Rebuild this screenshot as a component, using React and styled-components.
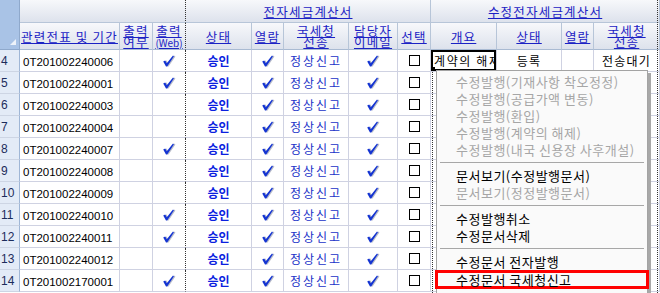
import styled, { createGlobalStyle } from 'styled-components'

const Global = createGlobalStyle`
  html, body { margin: 0; padding: 0; background: #fff; }
  body { font-family: "Noto Sans CJK KR", "Liberation Sans", sans-serif; }
`

const cols = [20, 100, 33, 33, 66, 32, 65, 49, 33, 66, 65, 32, 66]

const rows = [
  { n: 4, id: '0T201002240006', web: true, memo: '계약의 해제', state: '등록', nts: '전송대기' },
  { n: 5, id: '0T201002240001', web: true },
  { n: 6, id: '0T201002240003' },
  { n: 7, id: '0T201002240004' },
  { n: 8, id: '0T201002240007', web: true },
  { n: 9, id: '0T201002240008' },
  { n: 10, id: '0T201002240009' },
  { n: 11, id: '0T201002240010', web: true },
  { n: 12, id: '0T201002240011', web: true },
  { n: 13, id: '0T201002240012' },
  { n: 14, id: '0T201002170001', web: true },
]

const menu = [
  { label: '수정발행(기재사항 착오정정)', off: true },
  { label: '수정발행(공급가액 변동)', off: true },
  { label: '수정발행(환입)', off: true },
  { label: '수정발행(계약의 해제)', off: true },
  { label: '수정발행(내국 신용장 사후개설)', off: true },
  'sep',
  { label: '문서보기(수정발행문서)' },
  { label: '문서보기(정정발행문서)', off: true },
  'sep',
  { label: '수정발행취소' },
  { label: '수정문서삭제' },
  'sep',
  { label: '수정문서 전자발행' },
  { label: '수정문서 국세청신고', mark: true },
]

const Check = () => (
  <svg width="14" height="14" viewBox="0 0 14 14">
    <polygon points="2.6,7.6 4.6,6.6 6.2,9.4 12.4,1.6 13.4,2.4 6.6,12.6 5.4,12.6" fill="#b8bcc8" />
    <polygon points="1.2,7.4 3.2,6.4 4.8,9.2 11,1.4 12,2.2 5.2,12.4 4,12.4" fill="#1434d2" />
  </svg>
)

export default function App() {
  return (
    <>
      <Global />
      <Sheet>
        <Grid>
          <colgroup>
            {cols.map((w, i) => <col key={i} style={{ width: w }} />)}
          </colgroup>
          <thead>
            <tr>
              <Corner rowSpan={2} />
              <GroupHead colSpan={3} dotted />
              <GroupHead colSpan={5}><Link>전자세금계산서</Link></GroupHead>
              <GroupHead colSpan={4}><Link>수정전자세금계산서</Link></GroupHead>
            </tr>
            <tr>
              <Head><Link>관련전표 및 기간</Link></Head>
              <Head><Link>출력<br />여부</Link></Head>
              <Head dotted><Link>출력<br /><Small>(Web)</Small></Link></Head>
              <Head><Link>상태</Link></Head>
              <Head><Link>열람</Link></Head>
              <Head><Link>국세청<br />전송</Link></Head>
              <Head><Link>담당자<br />이메일</Link></Head>
              <Head><Link>선택</Link></Head>
              <Head><Link>개요</Link></Head>
              <Head><Link>상태</Link></Head>
              <Head><Link>열람</Link></Head>
              <Head><Link>국세청<br />전송</Link></Head>
            </tr>
          </thead>
          <tbody>
            {rows.map(r => (
              <tr key={r.n}>
                <RowNo>{r.n}</RowNo>
                <Cell align="left"><Code>{r.id}</Code></Cell>
                <Cell />
                <Cell dotted>{r.web && <Check />}</Cell>
                <Cell><Approved>승인</Approved></Cell>
                <Cell><Check /></Cell>
                <Cell><Report>정상신고</Report></Cell>
                <Cell><Check /></Cell>
                <Cell><Box /></Cell>
                <Cell align="left" selected={!!r.memo}>{r.memo}</Cell>
                <Cell>{r.state}</Cell>
                <Cell />
                <Cell>{r.nts}</Cell>
              </tr>
            ))}
          </tbody>
        </Grid>
        <FocusLine style={{ left: 432, top: 72, bottom: 0 }} />
        <FocusLine style={{ left: 657, top: 0, bottom: 0 }} />
        <Menu>
          {menu.map((m, i) =>
            m === 'sep'
              ? <Sep key={i} />
              : <Item key={i} off={m.off} mark={m.mark}>{m.label}</Item>
          )}
        </Menu>
      </Sheet>
    </>
  )
}

const Sheet = styled.div`
  position: relative;
  width: 660px;
  height: 293px;
  overflow: hidden;
  background: #fff;
`

const Grid = styled.table`
  table-layout: fixed;
  width: 660px;
  border-collapse: separate;
  border-spacing: 0;
  font-size: 12px;
`

const headBg = 'linear-gradient(#f7f8fb, #dde2ec)'

const Corner = styled.th`
  position: relative;
  padding: 0;
  background: #a9c3e6;
  border-right: 1px solid #8fa9cc;
  border-bottom: 1px solid #8fa9cc;
  &::after {
    content: '';
    position: absolute;
    right: 3px;
    bottom: 4px;
    border-left: 6px solid transparent;
    border-bottom: 6px solid #eef3fa;
  }
`

const GroupHead = styled.th`
  height: 22px;
  padding: 0;
  background: ${headBg};
  border-bottom: 1px solid #b7c5d8;
  border-right: 1px ${p => (p.dotted ? 'dotted #333' : 'solid #b7c5d8')};
  font-weight: normal;
  text-align: center;
  vertical-align: middle;
`

const Head = styled.th`
  height: 26px;
  padding: 0;
  background: ${headBg};
  border-bottom: 1px solid #a9bad2;
  border-right: 1px ${p => (p.dotted ? 'dotted #333' : 'solid #b7c5d8')};
  font-weight: normal;
  text-align: center;
  vertical-align: middle;
  line-height: 11px;
  overflow: hidden;
  white-space: nowrap;
`

const Link = styled.span`
  color: #1b22c4;
  text-decoration: underline;
  letter-spacing: 1.2px;
  font-size: 12.5px;
`

const Small = styled.span`
  font-size: 10px;
  letter-spacing: 0;
`

const RowNo = styled.td`
  height: 21px;
  padding: 0 0 0 1px;
  background: #e3ebf7;
  border-right: 1px solid #9fb6d6;
  border-bottom: 1px solid #cdd5e4;
  color: #1c2c5c;
  font-family: "Liberation Sans", sans-serif;
  font-size: 12px;
  text-align: left;
`

const Cell = styled.td`
  position: relative;
  height: 21px;
  padding: 0 ${p => (p.align === 'left' ? '3px' : '0')};
  border-right: 1px ${p => (p.dotted ? 'dotted #333' : 'solid #cfd2e2')};
  border-bottom: 1px solid #cfd2e2;
  text-align: ${p => p.align || 'center'};
  vertical-align: middle;
  white-space: nowrap;
  overflow: hidden;
  color: #000;
  font-size: 12px;
  letter-spacing: 1.2px;
  font-family: "Noto Sans CJK KR", sans-serif;
  svg { display: block; margin: 0 auto; }
  ${p => p.selected && `
    letter-spacing: 1.6px;
    box-shadow: inset 0 0 0 2px #000;
    &::after {
      content: '';
      position: absolute;
      left: 0;
      bottom: 0;
      width: 4px;
      height: 4px;
      background: #000;
    }
  `}
`

const Code = styled.span`
  font-family: "Liberation Sans", sans-serif;
  font-size: 11.5px;
  letter-spacing: 0;
`

const Approved = styled.span`
  color: #0a1fe0;
  font-weight: bold;
  letter-spacing: 0;
`

const Report = styled.span`
  color: #2132c8;
  letter-spacing: 2px;
`

const Box = styled.span`
  display: block;
  margin: 0 auto;
  width: 9px;
  height: 9px;
  border: 1.5px solid #000;
  background: #fff;
`

const FocusLine = styled.div`
  position: absolute;
  width: 0;
  border-left: 1px dotted #333;
`

const Menu = styled.div`
  position: absolute;
  left: 436px;
  top: 70px;
  width: 210px;
  padding: 2px 0 4px;
  background: #fafafa;
  border: 1px solid #a3a3a3;
  box-shadow: 3px 3px 0 #a8a8a8;
  display: flex;
  flex-direction: column;
`

const Item = styled.div`
  height: 17px;
  line-height: 17px;
  padding-left: 19px;
  font-size: 13px;
  letter-spacing: 0.5px;
  white-space: nowrap;
  color: ${p => (p.off ? '#a6a6a6' : '#000')};
  ${p => p.mark && `
    height: 19px;
    line-height: 19px;
    margin: 0 -2px;
    padding-left: 21px;
    box-shadow: inset 0 0 0 3px #f00;
  `}
`

const Sep = styled.div`
  height: 1px;
  margin: 4px 3px;
  background: #a7a7a7;
`
